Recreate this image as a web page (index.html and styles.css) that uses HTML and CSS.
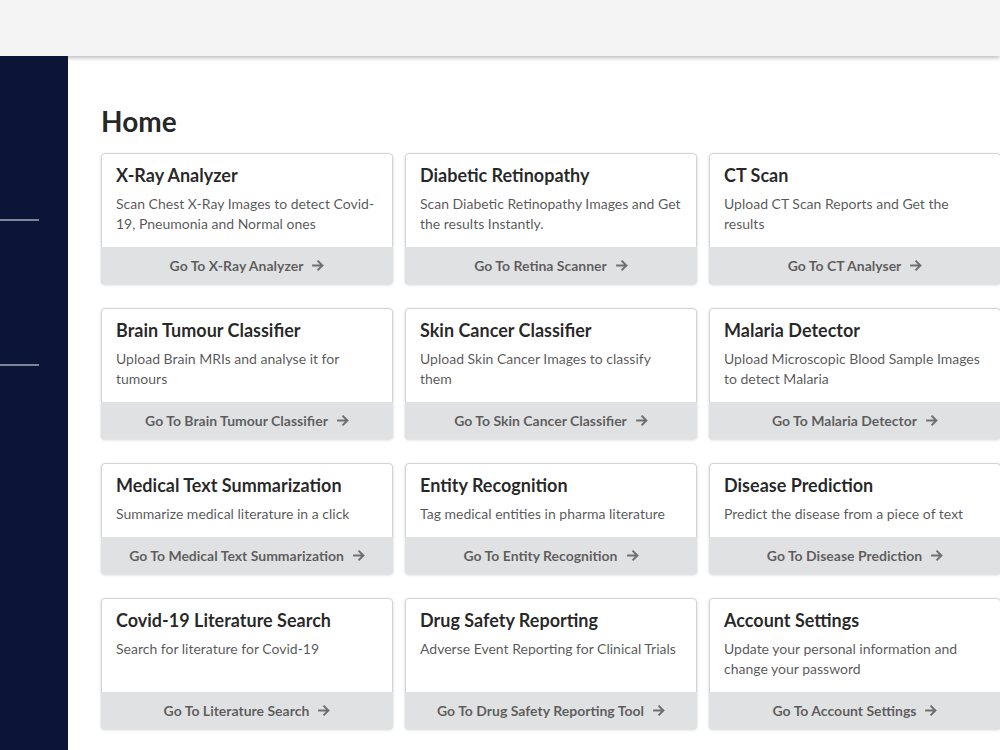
FILE: index.html
```html
<!DOCTYPE html>
<html lang="en">
<head>
  <meta charset="UTF-8">
  <title>Home</title>
  <link rel="stylesheet" href="styles.css">
</head>
<body>
  <header class="topbar"></header>

  <div class="layout">
    <nav class="sidebar">
      <span class="rule rule-first"></span>
      <span class="rule rule-second"></span>
    </nav>

    <main class="content">
      <h2 class="page-title">Home</h2>

      <div class="cards">
        <div class="card">
          <div class="card-body">
            <div class="card-title">X-Ray Analyzer</div>
            <div class="card-desc">Scan Chest X-Ray Images to detect Covid-19, Pneumonia and Normal ones</div>
          </div>
          <a class="card-button">Go To X-Ray Analyzer <svg class="arrow" viewBox="0 0 12 12"><path d="M1 6H10.5M6 1.5L10.5 6L6 10.5"/></svg></a>
        </div>

        <div class="card">
          <div class="card-body">
            <div class="card-title">Diabetic Retinopathy</div>
            <div class="card-desc">Scan Diabetic Retinopathy Images and Get the results Instantly.</div>
          </div>
          <a class="card-button">Go To Retina Scanner <svg class="arrow" viewBox="0 0 12 12"><path d="M1 6H10.5M6 1.5L10.5 6L6 10.5"/></svg></a>
        </div>

        <div class="card">
          <div class="card-body">
            <div class="card-title">CT Scan</div>
            <div class="card-desc">Upload CT Scan Reports and Get the results</div>
          </div>
          <a class="card-button">Go To CT Analyser <svg class="arrow" viewBox="0 0 12 12"><path d="M1 6H10.5M6 1.5L10.5 6L6 10.5"/></svg></a>
        </div>

        <div class="card">
          <div class="card-body">
            <div class="card-title">Brain Tumour Classifier</div>
            <div class="card-desc">Upload Brain MRIs and analyse it for tumours</div>
          </div>
          <a class="card-button">Go To Brain Tumour Classifier <svg class="arrow" viewBox="0 0 12 12"><path d="M1 6H10.5M6 1.5L10.5 6L6 10.5"/></svg></a>
        </div>

        <div class="card">
          <div class="card-body">
            <div class="card-title">Skin Cancer Classifier</div>
            <div class="card-desc">Upload Skin Cancer Images to classify them</div>
          </div>
          <a class="card-button">Go To Skin Cancer Classifier <svg class="arrow" viewBox="0 0 12 12"><path d="M1 6H10.5M6 1.5L10.5 6L6 10.5"/></svg></a>
        </div>

        <div class="card">
          <div class="card-body">
            <div class="card-title">Malaria Detector</div>
            <div class="card-desc">Upload Microscopic Blood Sample Images to detect Malaria</div>
          </div>
          <a class="card-button">Go To Malaria Detector <svg class="arrow" viewBox="0 0 12 12"><path d="M1 6H10.5M6 1.5L10.5 6L6 10.5"/></svg></a>
        </div>

        <div class="card">
          <div class="card-body">
            <div class="card-title">Medical Text Summarization</div>
            <div class="card-desc">Summarize medical literature in a click</div>
          </div>
          <a class="card-button">Go To Medical Text Summarization <svg class="arrow" viewBox="0 0 12 12"><path d="M1 6H10.5M6 1.5L10.5 6L6 10.5"/></svg></a>
        </div>

        <div class="card">
          <div class="card-body">
            <div class="card-title">Entity Recognition</div>
            <div class="card-desc">Tag medical entities in pharma literature</div>
          </div>
          <a class="card-button">Go To Entity Recognition <svg class="arrow" viewBox="0 0 12 12"><path d="M1 6H10.5M6 1.5L10.5 6L6 10.5"/></svg></a>
        </div>

        <div class="card">
          <div class="card-body">
            <div class="card-title">Disease Prediction</div>
            <div class="card-desc">Predict the disease from a piece of text</div>
          </div>
          <a class="card-button">Go To Disease Prediction <svg class="arrow" viewBox="0 0 12 12"><path d="M1 6H10.5M6 1.5L10.5 6L6 10.5"/></svg></a>
        </div>

        <div class="card">
          <div class="card-body">
            <div class="card-title">Covid-19 Literature Search</div>
            <div class="card-desc">Search for literature for Covid-19</div>
          </div>
          <a class="card-button">Go To Literature Search <svg class="arrow" viewBox="0 0 12 12"><path d="M1 6H10.5M6 1.5L10.5 6L6 10.5"/></svg></a>
        </div>

        <div class="card">
          <div class="card-body">
            <div class="card-title">Drug Safety Reporting</div>
            <div class="card-desc">Adverse Event Reporting for Clinical Trials</div>
          </div>
          <a class="card-button">Go To Drug Safety Reporting Tool <svg class="arrow" viewBox="0 0 12 12"><path d="M1 6H10.5M6 1.5L10.5 6L6 10.5"/></svg></a>
        </div>

        <div class="card">
          <div class="card-body">
            <div class="card-title">Account Settings</div>
            <div class="card-desc">Update your personal information and change your password</div>
          </div>
          <a class="card-button">Go To Account Settings <svg class="arrow" viewBox="0 0 12 12"><path d="M1 6H10.5M6 1.5L10.5 6L6 10.5"/></svg></a>
        </div>
      </div>
    </main>
  </div>
</body>
</html>
```

FILE: styles.css
```css
html, body {
  margin: 0;
  height: 100%;
  overflow: hidden;
}

body {
  font-family: Lato, 'Helvetica Neue', Arial, sans-serif;
  font-size: 14px;
  background: #ffffff;
  color: rgba(0, 0, 0, 0.87);
}

.topbar {
  position: relative;
  z-index: 2;
  height: 56px;
  background: #f4f4f4;
  box-shadow: 0 2px 4px rgba(0, 0, 0, 0.25);
}

.layout {
  display: flex;
  height: calc(100% - 56px);
}

.sidebar {
  position: relative;
  z-index: 3;
  flex: 0 0 68px;
  background: #0c1538;
  display: flex;
  flex-direction: column;
  padding-top: 163px;
}

.rule {
  display: block;
  width: 39px;
  height: 2px;
  background: #7f8597;
}

.rule-second {
  margin-top: 143px;
}

.content {
  flex: 1;
  padding: 47px 0 0 33px;
  min-width: 0;
}

.page-title {
  margin: 0 0 14px;
  font-size: 28px;
  font-weight: 700;
  line-height: 36px;
  color: rgba(0, 0, 0, 0.87);
}

.cards {
  display: grid;
  grid-template-columns: repeat(3, 292px);
  column-gap: 12px;
  row-gap: 24px;
}

.card {
  display: flex;
  flex-direction: column;
  background: #ffffff;
  border: 1px solid #d4d4d5;
  border-radius: 4px;
  box-shadow: 0 1px 3px 0 #d4d4d5;
}

.card-body {
  flex: 1;
  padding: 14px 14px 13px;
}

.card-title {
  margin-top: -3.9px;
  font-size: 18px;
  font-weight: 700;
  line-height: 23px;
  color: rgba(0, 0, 0, 0.85);
}

.card-desc {
  margin-top: 7px;
  line-height: 20px;
  color: rgba(0, 0, 0, 0.68);
}

.card-button {
  display: flex;
  align-items: center;
  justify-content: center;
  gap: 8px;
  margin: 0 -1px -1px;
  padding: 11px 21px;
  line-height: 15px;
  font-weight: 700;
  color: rgba(0, 0, 0, 0.6);
  background: #e0e1e2;
  border-radius: 0 0 4px 4px;
  cursor: pointer;
}

.arrow {
  width: 13px;
  height: 13px;
  fill: none;
  stroke: #707070;
  stroke-width: 1.9;
}
```
